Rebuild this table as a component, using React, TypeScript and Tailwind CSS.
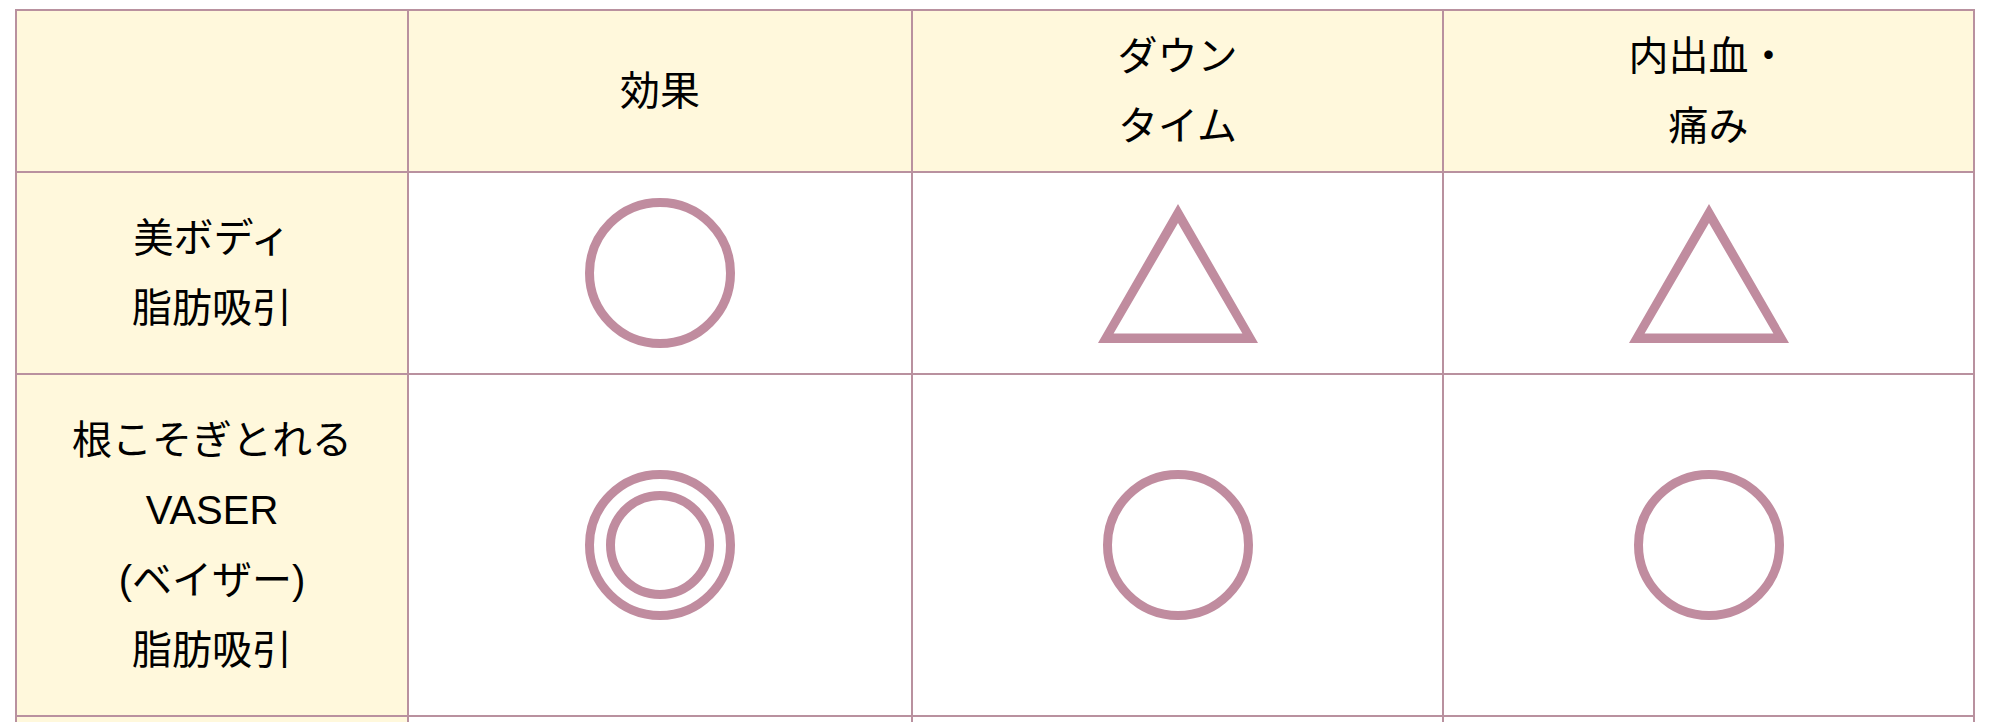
import React from "react";

const mark = "#c08c9f";

const Circle = () => (
    <svg width="150" height="150" viewBox="0 0 150 150" aria-label="○">
        <circle cx="75" cy="75" r="70.5" fill="none" stroke={mark} strokeWidth="9" />
    </svg>
);

const DoubleCircle = () => (
    <svg width="150" height="150" viewBox="0 0 150 150" aria-label="◎">
        <circle cx="75" cy="75" r="70.5" fill="none" stroke={mark} strokeWidth="9" />
        <circle cx="75" cy="75" r="49.5" fill="none" stroke={mark} strokeWidth="9" />
    </svg>
);

const Triangle = () => (
    <svg width="160" height="139" viewBox="0 0 160 139" aria-label="△">
        <path
            fillRule="evenodd"
            fill={mark}
            d="M80 0 L160 139 L0 139 Z M80 19 L144.4 129.6 L15.6 129.6 Z"
        />
    </svg>
);

const cell = "flex items-center justify-center text-center border-r-2 border-b-2 border-[#b9919f]";
const head = `${cell} bg-[#fff8dc] py-[11px]`;
const side = `${cell} bg-[#fff8dc] py-[31px]`;
const body = `${cell} bg-white py-[31px]`;

export default function App(): React.JSX.Element {
    return (
        <div className="min-h-[722px] bg-white pt-[9px] pl-[15px] font-['Liberation_Sans','Noto_Sans_CJK_JP',sans-serif] text-[40px] leading-[70px] text-black">
            <div className="grid w-max grid-cols-[392px_504px_531px_531px] grid-rows-[162px_202px_342px_220px] border-l-2 border-t-2 border-[#b9919f]">
                <div className={head}></div>
                <div className={head}>効果</div>
                <div className={head}>
                    <p>
                        ダウン
                        <br />
                        タイム
                    </p>
                </div>
                <div className={head}>
                    <p>
                        内出血・
                        <br />
                        痛み
                    </p>
                </div>

                <div className={side}>
                    <p>
                        美ボディ
                        <br />
                        脂肪吸引
                    </p>
                </div>
                <div className={body}>
                    <Circle />
                </div>
                <div className={body}>
                    <Triangle />
                </div>
                <div className={body}>
                    <Triangle />
                </div>

                <div className={side}>
                    <p>
                        根こそぎとれる
                        <br />
                        VASER
                        <br />
                        (ベイザー)
                        <br />
                        脂肪吸引
                    </p>
                </div>
                <div className={body}>
                    <DoubleCircle />
                </div>
                <div className={body}>
                    <Circle />
                </div>
                <div className={body}>
                    <Circle />
                </div>

                <div className={side}></div>
                <div className={body}></div>
                <div className={body}></div>
                <div className={body}></div>
            </div>
        </div>
    );
}
